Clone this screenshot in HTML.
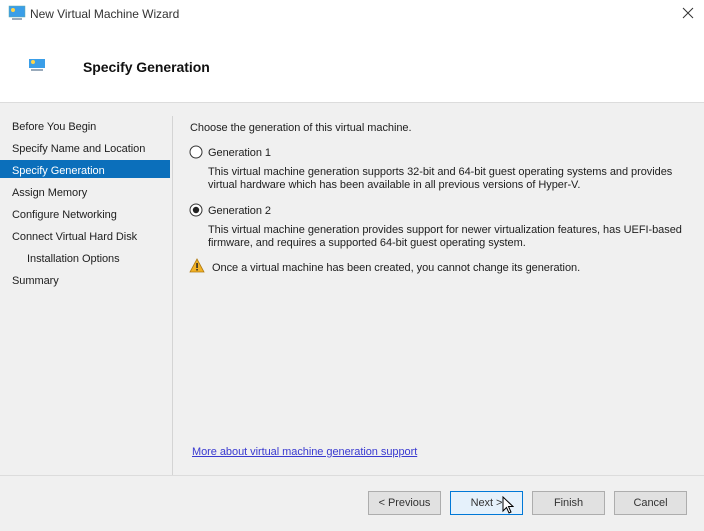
<!DOCTYPE html>
<html><head><style>
body{margin:0;width:704px;height:531px;overflow:hidden;background:#f0f0f0;font-family:"Liberation Sans",sans-serif;font-size:11px;color:#1e1e1e;position:relative;letter-spacing:-0.05px}
.a{position:absolute;white-space:nowrap}
.nav{position:absolute;left:12px;}
.btn{position:absolute;top:491px;width:71px;height:22px;border:1px solid #adadad;background:#e1e1e1;text-align:center;line-height:23px;font-size:11px;color:#333}
</style></head><body>
<div class="a" style="left:0;top:0;width:704px;height:102px;background:#fff;border-bottom:1px solid #dcdcdc"></div>
<svg class="a" style="left:8px;top:5px" width="18" height="16"><rect x="1" y="1" width="16" height="11" fill="#3a9ee8" stroke="#6aa" stroke-width=".5"/><circle cx="5" cy="5" r="2" fill="#ffd54a"/><rect x="4" y="13" width="10" height="2" fill="#9ab"/></svg>
<div class="a" style="left:30px;top:7px;font-size:12px;color:#333">New Virtual Machine Wizard</div>
<svg class="a" style="left:682px;top:7px" width="12" height="12"><path d="M1 1L11 11M11 1L1 11" stroke="#333" stroke-width="1"/></svg>
<svg class="a" style="left:28px;top:58px" width="18" height="14"><rect x="1" y="1" width="16" height="9" fill="#3a9ee8"/><circle cx="5" cy="4" r="2" fill="#ffd54a"/><rect x="3" y="11" width="12" height="2" fill="#9ab"/></svg>
<div class="a" style="left:83px;top:59px;font-size:14px;font-weight:bold;color:#111">Specify Generation</div>
<div class="a" style="left:172px;top:116px;width:1px;height:360px;background:#d4d4d4"></div>
<div class="a" style="left:0;top:160px;width:170px;height:18px;background:#0b6fbb"></div>
<div class="nav a" style="top:121px">Before You Begin</div>
<div class="nav a" style="top:143px">Specify Name and Location</div>
<div class="nav a" style="top:165px;color:#fff">Specify Generation</div>
<div class="nav a" style="top:187px">Assign Memory</div>
<div class="nav a" style="top:209px">Configure Networking</div>
<div class="nav a" style="top:231px">Connect Virtual Hard Disk</div>
<div class="nav a" style="top:253px;left:27px">Installation Options</div>
<div class="nav a" style="top:275px">Summary</div>
<div class="a" style="left:190px;top:122px">Choose the generation of this virtual machine.</div>
<svg class="a" style="left:189px;top:145px" width="14" height="14"><circle cx="7" cy="7" r="6" fill="#fff" stroke="#333"/></svg>
<div class="a" style="left:208px;top:147px">Generation 1</div>
<div class="a" style="left:208px;top:166px;line-height:13px">This virtual machine generation supports 32-bit and 64-bit guest operating systems and provides<br>virtual hardware which has been available in all previous versions of Hyper-V.</div>
<svg class="a" style="left:189px;top:203px" width="14" height="14"><circle cx="7" cy="7" r="6" fill="#fff" stroke="#333"/><circle cx="7" cy="7" r="3.2" fill="#222"/></svg>
<div class="a" style="left:208px;top:205px">Generation 2</div>
<div class="a" style="left:208px;top:224px;line-height:13px">This virtual machine generation provides support for newer virtualization features, has UEFI-based<br>firmware, and requires a supported 64-bit guest operating system.</div>
<svg class="a" style="left:189px;top:258px" width="16" height="15"><path d="M8 1L15 14H1Z" fill="#f2b124" stroke="#b07a10" stroke-width=".8"/><rect x="7.3" y="5" width="1.5" height="5" fill="#222"/><rect x="7.3" y="11" width="1.5" height="1.5" fill="#222"/></svg>
<div class="a" style="left:212px;top:262px">Once a virtual machine has been created, you cannot change its generation.</div>
<div class="a" style="left:192px;top:446px;color:#3a3ad0;text-decoration:underline">More about virtual machine generation support</div>
<div class="a" style="left:0;top:475px;width:704px;height:1px;background:#dcdcdc"></div>
<div class="btn" style="left:368px">&lt; Previous</div>
<div class="btn" style="left:450px;border-color:#0078d7;background:#e5f1fb">Next &gt;</div>
<div class="btn" style="left:532px">Finish</div>
<div class="btn" style="left:614px">Cancel</div>
<svg class="a" style="left:502px;top:496px" width="12" height="19"><path d="M1 1V15L4.5 11.5L7 17L9 16L6.5 10.5H11Z" fill="#fff" stroke="#000" stroke-width="1"/></svg>
</body></html>
